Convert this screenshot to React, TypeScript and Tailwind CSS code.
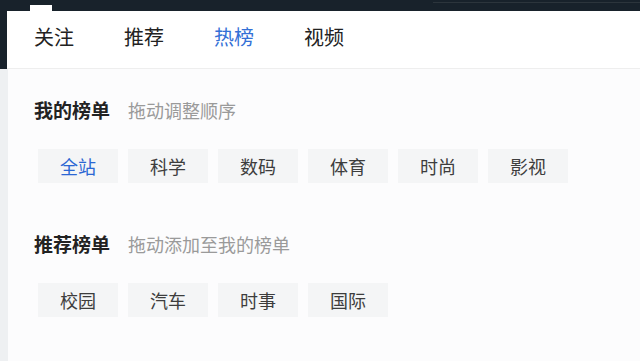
const tabs = ["关注", "推荐", "热榜", "视频"];
const myBoards = ["全站", "科学", "数码", "体育", "时尚", "影视"];
const suggested = ["校园", "汽车", "时事", "国际"];

function Chip({ label, active }: { label: string; active?: boolean }) {
  return (
    <div
      className={
        "flex h-[34px] w-[80px] items-center justify-center bg-[#f4f5f6] text-[18px] leading-none " +
        (active ? "text-[#2b67d3]" : "text-[#3d3d3d]")
      }
    >
      {label}
    </div>
  );
}

function Section({
  title,
  hint,
  items,
  className,
}: {
  title: string;
  hint: string;
  items: string[];
  className?: string;
}) {
  return (
    <div className={className}>
      <div className="ml-[26px] flex items-center leading-none">
        <span className="text-[19px] font-bold text-[#222]">{title}</span>
        <span className="ml-[18px] text-[18px] text-[#9a9a9a]">{hint}</span>
      </div>
      <div className="ml-[30px] mt-[30px] flex gap-[10px]">
        {items.map((it, i) => (
          <Chip key={it} label={it} active={i === 0 && title === "我的榜单"} />
        ))}
      </div>
    </div>
  );
}

export default function App() {
  return (
    <div
      className="flex h-[361px] w-[640px] flex-col overflow-hidden bg-[#18222b]"
      style={{ fontFamily: '"Noto Sans CJK SC", "Noto Sans", sans-serif' }}
    >
      <div className="flex h-[11px] shrink-0">
        <div className="ml-[30px] mt-[5px] h-[6px] w-[22px] bg-white" />
        <div className="ml-auto mt-[2px] h-px w-[207px] bg-[#2c353c]" />
      </div>
      <div className="ml-[7px] flex h-[58px] shrink-0 items-center gap-[50px] border-b border-[#eeeeee] bg-white pb-[5px] pl-[27px] text-[20px] leading-none text-[#222]">
        {tabs.map((t) => (
          <span key={t} className={t === "热榜" ? "text-[#3370d6]" : ""}>
            {t}
          </span>
        ))}
      </div>
      <div className="flex flex-1 bg-[#eef0f2]">
        <div className="ml-[8px] flex-1 bg-[#fcfcfd]">
          <Section className="mt-[31px]" title="我的榜单" hint="拖动调整顺序" items={myBoards} />
          <Section className="mt-[51px]" title="推荐榜单" hint="拖动添加至我的榜单" items={suggested} />
        </div>
      </div>
    </div>
  );
}
